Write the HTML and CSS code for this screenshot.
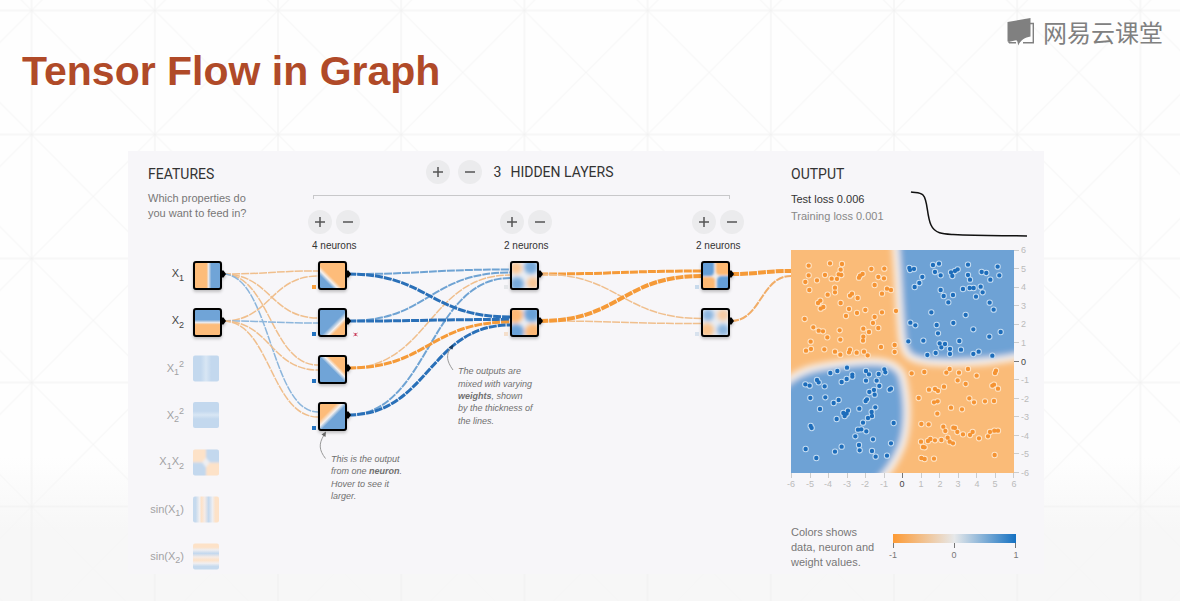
FILE: index.html
```html
<!DOCTYPE html>
<html lang="en">
<head>
<meta charset="utf-8">
<title>Tensor Flow in Graph</title>
<link rel="stylesheet" href="styles.css">
</head>
<body>
<svg class="backdrop" aria-hidden="true">
  <defs>
    <pattern id="lattice" x="31.6" y="10.5" width="123.2" height="124" patternUnits="userSpaceOnUse">
      <path d="M0 0L123.2 124M123.2 0L0 124" class="lattice-diagonal"/>
      <path d="M0 0H123.2M0 0V124M0 124H123.2M123.2 0V124" class="lattice-line"/>
    </pattern>
  </defs>
  <rect width="100%" height="100%" fill="url(#lattice)"/>
</svg>

<header class="slide-header">
  <h1 class="slide-title">Tensor Flow in Graph</h1>
  <div class="brand">
    <svg class="brand-icon" viewBox="0 0 28 28" aria-hidden="true">
      <path d="M23 5.5H26.3V24.8H16M9 24.8H2.500L1.500 23.500" fill="none" stroke="#808080" stroke-width="1.400"/>
      <path d="M.500 4L23.500 0V18.500C18 19.500 13.500 22 11.300 27.500C10.500 24 10.500 22.500 9 22.300L2.500 23.700L.500 23.500Z" fill="#808080"/>
    </svg>
    <span class="brand-name" lang="zh-CN">网易云课堂</span>
  </div>
</header>

<main class="panel">
  <section class="network">
    <div class="network-head">
      <div class="features-head">
        <h2 class="heading">FEATURES</h2>
        <p class="note">Which properties do<br>you want to feed in?</p>
      </div>
      <div class="layers-head">
        <div class="layer-count">
          <button class="round" aria-label="Add layer"><svg viewBox="0 0 24 24"><path d="M7 12H17M12 7V17"/></svg></button>
          <button class="round" aria-label="Remove layer"><svg viewBox="0 0 24 24"><path d="M7 12H17"/></svg></button>
          <span class="heading count">3</span>
          <h2 class="heading">HIDDEN LAYERS</h2>
        </div>
        <div class="bracket"></div>
        <div class="layer-controls">
          <div class="layer">
            <div class="buttons">
              <button class="round" aria-label="Add neuron to layer 1"><svg viewBox="0 0 24 24"><path d="M7 12H17M12 7V17"/></svg></button>
              <button class="round" aria-label="Remove neuron from layer 1"><svg viewBox="0 0 24 24"><path d="M7 12H17"/></svg></button>
            </div>
            <span class="neurons">4 neurons</span>
          </div>
          <div class="layer">
            <div class="buttons">
              <button class="round" aria-label="Add neuron to layer 2"><svg viewBox="0 0 24 24"><path d="M7 12H17M12 7V17"/></svg></button>
              <button class="round" aria-label="Remove neuron from layer 2"><svg viewBox="0 0 24 24"><path d="M7 12H17"/></svg></button>
            </div>
            <span class="neurons">2 neurons</span>
          </div>
          <div class="layer">
            <div class="buttons">
              <button class="round" aria-label="Add neuron to layer 3"><svg viewBox="0 0 24 24"><path d="M7 12H17M12 7V17"/></svg></button>
              <button class="round" aria-label="Remove neuron from layer 3"><svg viewBox="0 0 24 24"><path d="M7 12H17"/></svg></button>
            </div>
            <span class="neurons">2 neurons</span>
          </div>
        </div>
      </div>
    </div>

    <svg class="diagram" viewBox="128 256 663 318">
      <defs>
        <linearGradient id="split-x"><stop offset=".46" stop-color="#fdbc7a"/><stop offset=".54" stop-color="#e8e8ec"/><stop offset=".64" stop-color="#70a4d7"/></linearGradient>
        <linearGradient id="split-y" x2="0" y2="1"><stop offset=".4" stop-color="#70a4d7"/><stop offset=".5" stop-color="#e8e8ec"/><stop offset=".58" stop-color="#fdbc7a"/></linearGradient>
        <linearGradient id="n1" x1="0" y1="1" x2="1" y2="0"><stop offset=".27" stop-color="#70a4d7"/><stop offset=".36" stop-color="#f4f0ee"/><stop offset=".45" stop-color="#fdbc7a"/></linearGradient>
        <linearGradient id="n2" x2="1" y2="1"><stop offset=".53" stop-color="#70a4d7"/><stop offset=".65" stop-color="#f4f0ee"/><stop offset=".73" stop-color="#fdbc7a"/></linearGradient>
        <linearGradient id="n3" x1="0" y1="1" x2="1" y2="0"><stop offset=".5" stop-color="#70a4d7"/><stop offset=".59" stop-color="#f4f0ee"/><stop offset=".67" stop-color="#fdbc7a"/></linearGradient>
        <linearGradient id="n4" x2="1" y2="1"><stop offset=".33" stop-color="#fdbc7a"/><stop offset=".44" stop-color="#f4f0ee"/><stop offset=".54" stop-color="#70a4d7"/></linearGradient>
        <linearGradient id="square-x"><stop offset=".3" stop-color="#c3d8ee"/><stop offset=".5" stop-color="#d8e6f4"/><stop offset=".7" stop-color="#c3d8ee"/></linearGradient>
        <linearGradient id="square-y" x2="0" y2="1"><stop offset=".35" stop-color="#c3d8ee"/><stop offset=".5" stop-color="#d8e6f4"/><stop offset=".65" stop-color="#c3d8ee"/></linearGradient>
        <linearGradient id="sin-x"><stop offset=".1" stop-color="#c6daee"/><stop offset=".25" stop-color="#f1eff0"/><stop offset=".33" stop-color="#fde2c8"/><stop offset=".45" stop-color="#f5ebe6"/><stop offset=".6" stop-color="#c3d8ee"/><stop offset=".75" stop-color="#eeeef1"/><stop offset=".86" stop-color="#fde2c8"/></linearGradient>
        <linearGradient id="sin-y" x2="0" y2="1"><stop offset=".14" stop-color="#fde2c8"/><stop offset=".25" stop-color="#eeeef1"/><stop offset=".38" stop-color="#c3d8ee"/><stop offset=".52" stop-color="#f5ebe6"/><stop offset=".64" stop-color="#fde2c8"/><stop offset=".76" stop-color="#f1eff0"/><stop offset=".88" stop-color="#c6daee"/></linearGradient>
        <filter id="soft" x="-50%" y="-50%" width="200%" height="200%"><feGaussianBlur stdDeviation="2"/></filter>
        <filter id="soft-1" x="-50%" y="-50%" width="200%" height="200%"><feGaussianBlur stdDeviation="1"/></filter>
        <filter id="shadow" x="-20%" y="-20%" width="140%" height="150%"><feDropShadow dx="0" dy="2" stdDeviation="1.500" flood-opacity=".22"/></filter>
        <clipPath id="tile"><rect x="1" y="1" width="27" height="27" rx="2"/></clipPath>
        <clipPath id="small-tile"><rect width="26" height="26" rx="2"/></clipPath>
        <g id="frame">
          <rect x="1" y="1" width="27" height="27" rx="2" fill="none" stroke="#000" stroke-width="2"/>
          <path d="M29 9.500H30.500L33 13L30.500 16.500H29Z"/>
        </g>
      </defs>

      <g class="links">
        <path class="orange pale" d="M223 274C270.500 274 270.500 271 318 271"/>
        <path class="orange pale" d="M223 274C270.500 274 270.500 318 318 318"/>
        <path class="orange pale" d="M223 274C270.500 274 270.500 365 318 365"/>
        <path class="blue pale" d="M223 274C270.500 274 270.500 412 318 412"/>
        <path class="orange pale" d="M223 321C270.500 321 270.500 276 318 276"/>
        <path class="blue pale" d="M223 321C270.500 321 270.500 323 318 323"/>
        <path class="orange pale" d="M223 321C270.500 321 270.500 370 318 370"/>
        <path class="orange pale" d="M223 321C270.500 321 270.500 417 318 417"/>

        <path class="blue medium" d="M348 274C429 274 429 269.500 510 269.500"/>
        <path class="blue medium" d="M348 321C429 321 429 272.500 510 272.500"/>
        <path class="orange pale" d="M348 368C429 368 429 275 510 275"/>
        <path class="blue medium" d="M348 415C429 415 429 278 510 278"/>
        <path class="blue strong" d="M348 274C429 274 429 317 510 317"/>
        <path class="blue strong" d="M348 321C429 321 429 319.500 510 319.500"/>
        <path class="orange strong" d="M348 368C429 368 429 322 510 322"/>
        <path class="blue strong" d="M348 415C429 415 429 325 510 325"/>

        <path class="orange strong" d="M540 274C621 274 621 271 702 271"/>
        <path class="orange pale" d="M540 274C621 274 621 318.500 702 318.500"/>
        <path class="orange pale" d="M540 321C621 321 621 323.500 702 323.500"/>
        <path class="orange heavy" d="M540 321C621 321 621 276 702 276"/>

        <path class="orange heavy" d="M731 274C761 274 761 271 791 271"/>
        <path class="orange medium" d="M731 321C761 321 761 276 791 276"/>
      </g>

      <g class="feature-labels">
        <text x="184" y="277">X<tspan class="sub" dy="4">1</tspan></text>
        <text x="184" y="324">X<tspan class="sub" dy="4">2</tspan></text>
        <g class="off">
          <text x="184" y="372">X<tspan class="sub" dy="3">1</tspan><tspan class="sub" dy="-8">2</tspan></text>
          <text x="184" y="419">X<tspan class="sub" dy="3">2</tspan><tspan class="sub" dy="-8">2</tspan></text>
          <text x="184" y="465">X<tspan class="sub" dy="4">1</tspan><tspan dy="-4">X</tspan><tspan class="sub" dy="4">2</tspan></text>
          <text x="184" y="513">sin(X<tspan class="sub" dy="3">1</tspan><tspan dy="-3">)</tspan></text>
          <text x="184" y="560">sin(X<tspan class="sub" dy="3">2</tspan><tspan dy="-3">)</tspan></text>
        </g>
      </g>

      <rect x="193" y="355.500" width="26" height="26" rx="2" fill="url(#square-x)"/>
      <rect x="193" y="402" width="26" height="26" rx="2" fill="url(#square-y)"/>
      <g transform="translate(193 449.500)" clip-path="url(#small-tile)">
        <rect width="26" height="26" fill="#eeeef1"/>
        <g filter="url(#soft-1)"><path d="M-4-4H13V8L9 13H-4ZM30 30H13V18L17 13H30Z" fill="#fde2c8"/><path d="M30-4H13V8L17 13H30ZM-4 30H13V18L9 13H-4Z" fill="#c3d8ee"/></g>
      </g>
      <rect x="193" y="496.500" width="26" height="26" rx="2" fill="url(#sin-x)"/>
      <rect x="193" y="543.500" width="26" height="26" rx="2" fill="url(#sin-y)"/>

      <g transform="translate(193 261)" filter="url(#shadow)"><rect x="1" y="1" width="27" height="27" fill="url(#split-x)"/><use href="#frame"/></g>
      <g transform="translate(193 308)" filter="url(#shadow)"><rect x="1" y="1" width="27" height="27" fill="url(#split-y)"/><use href="#frame"/></g>
      <g transform="translate(318 261)" filter="url(#shadow)"><rect x="1" y="1" width="27" height="27" fill="url(#n1)"/><use href="#frame"/></g>
      <g transform="translate(318 308)" filter="url(#shadow)"><rect x="1" y="1" width="27" height="27" fill="url(#n2)"/><use href="#frame"/></g>
      <g transform="translate(318 355)" filter="url(#shadow)"><rect x="1" y="1" width="27" height="27" fill="url(#n3)"/><use href="#frame"/></g>
      <g transform="translate(318 402)" filter="url(#shadow)"><rect x="1" y="1" width="27" height="27" fill="url(#n4)"/><use href="#frame"/></g>

      <g transform="translate(510 261)" filter="url(#shadow)">
        <g clip-path="url(#tile)"><rect width="29" height="29" fill="#eaeef3"/>
          <g filter="url(#soft)"><circle cx="6" cy="7" r="6" fill="#fbc795"/><circle cx="21" cy="6" r="7" fill="#78aadb"/><circle cx="7" cy="23" r="7" fill="#78aadb"/><circle cx="23" cy="22" r="6" fill="#fbc795"/></g></g>
        <use href="#frame"/>
      </g>
      <g transform="translate(510 308)" filter="url(#shadow)">
        <g clip-path="url(#tile)"><rect width="29" height="29" fill="#eaeef3"/>
          <g filter="url(#soft)"><circle cx="5" cy="7" r="8" fill="#fdb874"/><circle cx="22" cy="6" r="8" fill="#6ba2d8"/><circle cx="6" cy="24" r="8" fill="#6ba2d8"/><circle cx="23" cy="24" r="8" fill="#fdb874"/></g></g>
        <use href="#frame"/>
      </g>
      <g transform="translate(701 261)" filter="url(#shadow)">
        <g clip-path="url(#tile)"><rect width="29" height="29" fill="#f0ece9"/>
          <g filter="url(#soft-1)"><path d="M15-3H32V14H19Q15 14 15 10ZM-3 16H9Q14 16 14 20V32H-3Z" fill="#fdb872"/><path d="M-3-3H13V10Q13 15 9 15H-3ZM32 32H16V20Q16 15 21 15H32Z" fill="#659ed7"/></g></g>
        <use href="#frame"/>
      </g>
      <g transform="translate(701 308)" filter="url(#shadow)">
        <g clip-path="url(#tile)"><rect width="29" height="29" fill="#e8edf3"/>
          <g filter="url(#soft)"><circle cx="7" cy="7" r="6" fill="#8db6df"/><circle cx="22" cy="7" r="6" fill="#f8cca4"/><circle cx="6" cy="22" r="7" fill="#fac58f"/><circle cx="22" cy="22" r="6" fill="#8db6df"/></g></g>
        <use href="#frame"/>
      </g>

      <rect x="312" y="285" width="4" height="4" fill="#f8a03f"/>
      <path d="M312 332h4v4h-4zM312 379h4v4h-4zM312 426h4v4h-4z" fill="#2473c0"/>
      <rect x="504" y="285" width="4" height="4" fill="#e4e6e9"/>
      <rect x="504" y="332" width="4" height="4" fill="#f4dfcc"/>
      <rect x="695" y="285" width="4" height="4" fill="#c8daec"/>
      <rect x="695" y="332" width="4" height="4" fill="#d8e2ee"/>
      <path d="M353.500 333L357.500 336M357.500 333L353.500 336M355.500 333V336" fill="none" stroke="#c7304f" stroke-width=".8"/>

      <path class="pointer" d="M325.500 458.500C319 450 318.500 444 324 435"/>
      <path class="pointer-head" d="M326 431.500L325.500 437L321.500 434.500Z"/>
      <path class="pointer" d="M453 370C446.500 361 446 355 450.500 348"/>
      <path class="pointer-head dark" d="M453.500 344.500L452.500 349.500L448.500 347.500Z"/>

      <text class="callout"><tspan x="331" y="462">This is the output</tspan><tspan x="331" y="474">from one <tspan class="bold">neuron</tspan>.</tspan><tspan x="331" y="487">Hover to see it</tspan><tspan x="331" y="499">larger.</tspan></text>
      <text class="callout"><tspan x="458" y="374">The outputs are</tspan><tspan x="458" y="387">mixed with varying</tspan><tspan x="458" y="399"><tspan class="bold">weights</tspan>, shown</tspan><tspan x="458" y="411">by the thickness of</tspan><tspan x="458" y="424">the lines.</tspan></text>
    </svg>
  </section>

  <section class="output">
    <div class="output-head">
      <h2 class="heading">OUTPUT</h2>
      <div class="loss">
        <p class="loss-values"><span class="test">Test loss 0.006</span><br>Training loss 0.001</p>
        <svg class="loss-curve" viewBox="0 0 118 48" aria-hidden="true"><path d="M1 3C5 4 10 3 13 6C18 11 16.500 26 21 36C25 45 34 45 43 45.500C70 47 90 46.500 117 47"/></svg>
      </div>
    </div>

    <svg class="heatmap" viewBox="791 244 253 252">
      <defs>
        <clipPath id="plot"><rect x="791" y="250" width="223" height="223"/></clipPath>
        <filter id="edge" x="-20%" y="-20%" width="140%" height="140%"><feGaussianBlur stdDeviation="3"/></filter>
        <path id="orange-a" d="M86 62h0M150 55h0M186 57h0M182 74h0M184 90h0M176 88h0M86 91h0M76 111h0M111 106h0M135 90h0M155 101h0M171 102h0M88 135h0M165 128h0M165 142h0M143 149h0M121 167h0M114 174h0M122 191h0M130 186h0M182 174h0M74 222h0M100 247h0M116 257h0M129 259h0M142 277h0M92 290h0M78 317h0M93 312h0M133 313h0M165 320h0M181 329h0M181 284h0M179 256h0M207 192h0M198 213h0M216 146h0M210 152h0M233 159h0M231 204h0M256 195h0M248 87h0M240 92h0M237 98h0M274 72h0M313 71h0M295 96h0M312 100h0M284 120h0M321 131h0M333 135h0M306 146h0M348 198h0M306 202h0M284 216h0M279 234h0M295 249h0M250 251h0M267 261h0M250 275h0M249 287h0M303 306h0M344 300h0M344 321h0M210 314h0M207 322h0M230 323h0M252 320h0M263 331h0"/>
        <path id="blue-a" d="M43 69h0M45 75h0M57 72h0M114 60h0M132 56h0M120 81h0M137 91h0M168 82h0M172 93h0M180 78h0M188 73h0M219 59h0M219 90h0M225 104h0M260 81h0M274 84h0M308 65h0M313 91h0M286 104h0M82 96h0M73 114h0M59 126h0M137 135h0M146 153h0M160 172h0M174 150h0M204 132h0M224 129h0M236 129h0M257 125h0M263 142h0M243 155h0M284 173h0M296 194h0M212 210h0M109 202h0M46 233h0M61 241h0M125 240h0M175 234h0M235 253h0M129 265h0M283 275h0M317 261h0M40 289h0M85 287h0M134 295h0M139 307h0M150 297h0M193 288h0M165 312h0M165 327h0M198 314h0M122 324h0M97 330h0M235 327h0M251 320h0M292 332h0"/>
        <path id="blue-b" d="M151 39h0M172 33h0M201 23h0M217 44h0M217 50h0M200 57h0M185 66h0M76 73h0M89 77h0M111 60h0M116 67h0M134 79h0M91 114h0M136 112h0M161 129h0M176 120h0M120 147h0M170 177h0M190 159h0M194 168h0M200 161h0M204 152h0M92 198h0M95 204h0M77 267h0M109 294h0M165 275h0M185 260h0M226 229h0M234 209h0M244 208h0M249 188h0M259 214h0M237 255h0M239 271h0M276 273h0M287 290h0M279 238h0M333 250h0M341 189h0M321 287h0M238 146h0M257 123h0M261 118h0M268 96h0M282 90h0M284 104h0M298 78h0M290 62h0M258 62h0M267 43h0M258 33h0M296 42h0M313 28h0M316 37h0M333 86h0M329 89h0M286 142h0M275 156h0M276 168h0M264 174h0"/>
        <path id="orange-b" d="M50 40h0M88 36h0M154 38h0M164 27h0M192 38h0M219 27h0M245 47h0M188 61h0M212 72h0M300 39h0M303 32h0M102 89h0M120 87h0M129 93h0M147 80h0M71 114h0M117 127h0M128 124h0M127 161h0M168 143h0M201 148h0M223 115h0M237 127h0M270 124h0M297 123h0M292 77h0M297 74h0M309 86h0M79 192h0M101 193h0M145 200h0M151 213h0M175 203h0M180 204h0M187 216h0M204 223h0M225 225h0M233 216h0M252 235h0M279 229h0M285 216h0M298 212h0M309 212h0M78 245h0M84 261h0M89 262h0M99 243h0M106 237h0M120 241h0M139 240h0M158 233h0M164 245h0M174 250h0M79 294h0M89 297h0M117 296h0M299 285h0"/>
      </defs>
      <g clip-path="url(#plot)">
        <rect x="791" y="250" width="223" height="223" fill="#fabb78"/>
        <g filter="url(#edge)">
          <path class="region" d="M895 238C899 285 899 315 902 339C904 357 912 360 929 362C958 364 990 364 1030 354V238Z"/>
          <path class="region" d="M775 394C795 368 818 366 846 363C870 360 898 358 903 378C908 400 909 426 902 446C896 461 888 474 870 490H775Z"/>
        </g>
      </g>
      <g class="dots" clip-path="url(#plot)">
        <g transform="translate(780 245) scale(.3333)"><use href="#orange-a" class="halo warm"/><use href="#orange-a" class="core warm-core"/></g>
        <g transform="translate(895 245) scale(.3333)"><use href="#blue-a" class="halo cool"/><use href="#blue-a" class="core cool-core"/></g>
        <g transform="translate(780 360) scale(.3333)"><use href="#blue-b" class="halo cool"/><use href="#blue-b" class="core cool-core"/></g>
        <g transform="translate(895 360) scale(.3333)"><use href="#orange-b" class="halo warm"/><use href="#orange-b" class="core warm-core"/></g>
      </g>
      <path class="ticks" d="M1014 250.500h5M1014 268.500h5M1014 287.500h5M1014 305.500h5M1014 324.500h5M1014 342.500h5M1014 379.500h5M1014 398.500h5M1014 416.500h5M1014 435.500h5M1014 453.500h5M1014 472.500h5M791.500 473v5M810.500 473v5M828.500 473v5M847.500 473v5M865.500 473v5M884.500 473v5M921.500 473v5M939.500 473v5M958.500 473v5M976.500 473v5M995.500 473v5M1013.500 473v5"/>
      <path class="ticks zero" d="M1014 361.500h5M902.500 473v5"/>
      <g class="axis">
        <text x="1021" y="253">6</text><text x="1021" y="272">5</text><text x="1021" y="290">4</text><text x="1021" y="309">3</text><text x="1021" y="327">2</text><text x="1021" y="346">1</text><text x="1021" y="365" class="origin">0</text><text x="1021" y="383">-1</text><text x="1021" y="402">-2</text><text x="1021" y="420">-3</text><text x="1021" y="439">-4</text><text x="1021" y="457">-5</text><text x="1021" y="476">-6</text>
      </g>
      <g class="axis bottom">
        <text x="791" y="487">-6</text><text x="810" y="487">-5</text><text x="828" y="487">-4</text><text x="847" y="487">-3</text><text x="865" y="487">-2</text><text x="884" y="487">-1</text><text x="902" y="487" class="origin">0</text><text x="921" y="487">1</text><text x="940" y="487">2</text><text x="958" y="487">3</text><text x="977" y="487">4</text><text x="995" y="487">5</text><text x="1014" y="487">6</text>
      </g>
    </svg>

    <div class="legend">
      <p class="note">Colors shows<br>data, neuron and<br>weight values.</p>
      <svg class="scale" viewBox="0 0 136 30">
        <defs><linearGradient id="weights"><stop stop-color="#fd9a35"/><stop offset=".5" stop-color="#e6e8ea"/><stop offset="1" stop-color="#1571c2"/></linearGradient></defs>
        <rect x="6" y="3" width="123" height="9" fill="url(#weights)"/>
        <path d="M6.500 12v5M67.500 12v5M128.500 12v5" fill="none" stroke="#777"/>
        <g class="scale-labels"><text x="6" y="27">-1</text><text x="67" y="27">0</text><text x="129" y="27">1</text></g>
      </svg>
    </div>
  </section>
</main>
</body>
</html>
```
FILE: styles.css
```css
* { box-sizing: border-box; }

body {
  margin: 0;
  min-height: 100vh;
  position: relative;
  font-family: "Liberation Sans", Arial, sans-serif;
  background: linear-gradient(to bottom, #fefefe 76%, #f7f7f7 88%);
}

h1, h2, p { margin: 0; font-weight: normal; }

.backdrop {
  position: absolute;
  inset: 0;
  width: 100%;
  height: 100%;
  z-index: -1;
}
.lattice-line { fill: none; stroke: #f0f0f0; stroke-width: 1; }
.lattice-diagonal { fill: none; stroke: #f6f6f6; stroke-width: 1; }

.slide-header {
  display: flex;
  justify-content: space-between;
  align-items: flex-start;
  min-height: 151px;
  padding: 16px 17px 0 22px;
}
.slide-title {
  padding-top: 32px;
  font-size: 41px;
  line-height: 46px;
  font-weight: bold;
  color: #b04a28;
}
.brand {
  display: flex;
  align-items: center;
  gap: 8px;
  color: #808080;
}
.brand-icon { width: 28px; height: 28px; }
.brand-name {
  font-family: "Noto Sans CJK SC", sans-serif;
  font-size: 24px;
  line-height: 32px;
}

.panel {
  display: grid;
  grid-template-columns: 663fr 253fr;
  align-items: start;
  margin: 0 136px 27px 128px;
  background: #f7f6f9;
}

.heading {
  font-family: Roboto, sans-serif;
  font-size: 14px;
  line-height: 16px;
  color: #333;
}
.note {
  font-size: 11px;
  line-height: 15px;
  color: #777;
}

.network-head {
  display: grid;
  grid-template-columns: 180fr 436fr 47fr;
  min-height: 105px;
}
.features-head { padding: 15px 0 0 20px; }
.features-head .note { padding-top: 9px; }
.layers-head { padding-top: 9px; }
.layer-count {
  display: flex;
  justify-content: center;
  align-items: center;
  gap: 8px;
  padding-right: 13px;
}
.count { padding: 0 1px 0 4px; }
.bracket {
  height: 4px;
  margin: 11px 14px 11px 5px;
  border: 1px solid #c8c8ca;
  border-bottom: 0;
}
.layer-controls { display: flex; justify-content: space-between; }
.buttons { display: flex; gap: 4px; }
.neurons {
  display: block;
  padding: 6px 0 0 4px;
  font-size: 10px;
  line-height: 12px;
  color: #333;
}
.round {
  width: 24px;
  height: 24px;
  padding: 0;
  border: 0;
  border-radius: 50%;
  background: #ebebed;
}
.round svg { display: block; width: 100%; }
.round path { fill: none; stroke: #555; stroke-width: 1.5; }

.diagram, .heatmap {
  display: block;
  width: 100%;
  height: auto;
  overflow: visible;
}

.links path { fill: none; stroke-dasharray: 8 1; }
.links .pale { stroke-width: 1.5; }
.links .medium { stroke-width: 2; }
.links .strong { stroke-width: 3; }
.links .heavy { stroke-width: 4; }
.orange { stroke: #f59a38; }
.orange.pale { stroke: #f0bf8d; }
.orange.medium { stroke: #f1ad68; }
.blue { stroke: #2a70b8; }
.blue.pale { stroke: #8db6dc; }
.blue.medium { stroke: #6fa3d3; }

.feature-labels { font-size: 11px; fill: #444; text-anchor: end; }
.feature-labels .off { fill: #a2a2a4; }
.sub { font-size: 9px; }

.pointer { fill: none; stroke: #999; stroke-width: 1; }
.pointer-head { fill: #666; }
.pointer-head.dark { fill: #173b62; }
.callout { font-size: 9px; font-style: italic; fill: #707070; }
.bold { font-weight: bold; }

.output-head { min-height: 93px; padding-top: 15px; }
.loss { display: flex; justify-content: space-between; padding: 7px 16px 0 0; }
.loss-values { font-size: 11px; line-height: 17px; padding-top: 2px; color: #888; }
.test { color: #333; }
.loss-curve { width: 118px; height: 48px; }
.loss-curve path { fill: none; stroke: #111; stroke-width: 1.5; }

.region { fill: #6ea2d5; stroke: #f6f0ed; stroke-width: 7; }
.dots { fill: none; stroke-linecap: round; }
.halo { stroke-width: 19; }
.core { stroke-width: 13; }
.warm { stroke: #fee3c5; }
.warm-core { stroke: #f59332; }
.cool { stroke: #c3dbf1; }
.cool-core { stroke: #1d6dbb; }

.ticks { fill: none; stroke: #ccc; }
.ticks.zero { stroke: #777; }
.axis { font-size: 9px; fill: #bbb; }
.axis.bottom { text-anchor: middle; }
.axis .origin { fill: #444; }

.legend {
  display: flex;
  align-items: flex-start;
  justify-content: space-between;
  padding: 29px 21px 4px 0;
}
.scale { width: 136px; height: 30px; margin-top: 6px; }
.scale-labels { font-size: 9px; fill: #777; text-anchor: middle; }
```
